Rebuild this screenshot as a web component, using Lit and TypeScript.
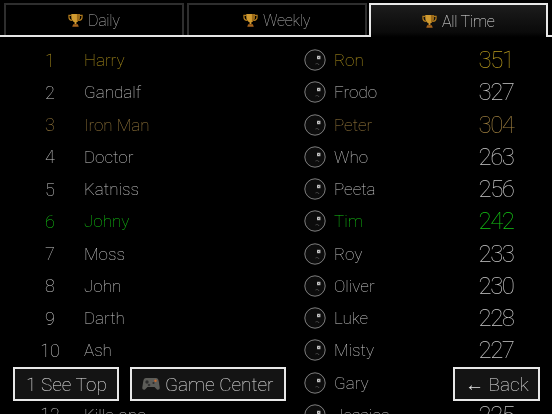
import { LitElement, html, css, svg } from "lit";
import { customElement } from "lit/decorators.js";

type Row = { a: string; b: string; s: number; c?: string };
const rows: Row[] = [
  { a: "Harry", b: "Ron", s: 351, c: "gold" },
  { a: "Gandalf", b: "Frodo", s: 327 },
  { a: "Iron Man", b: "Peter", s: 304, c: "bronze" },
  { a: "Doctor", b: "Who", s: 263 },
  { a: "Katniss", b: "Peeta", s: 256 },
  { a: "Johny", b: "Tim", s: 242, c: "green" },
  { a: "Moss", b: "Roy", s: 233 },
  { a: "John", b: "Oliver", s: 230 },
  { a: "Darth", b: "Luke", s: 228 },
  { a: "Ash", b: "Misty", s: 227 },
  { a: "", b: "Gary", s: 226 },
  { a: "Killa ono", b: "Jessica", s: 225 },
];

const trophy = svg`<svg class="trophy" viewBox="0 0 16 16" aria-hidden="true">
  <path d="M3.5 2.5H1v2c0 2 1.500 3.200 3.500 3.500M12.500 2.500H15v2c0 2-1.500 3.200-3.500 3.500" fill="none" stroke="#b07a1c" stroke-width="1.300"/>
  <path d="M3.500 1h9v3.500c0 3-2 4.800-3.500 5.300v2.200H7V9.800C5.500 9.300 3.500 7.500 3.500 4.500z" fill="#d09a30"/>
  <path d="M9.500 1h3v3.500c0 2.500-1.500 4.300-3 5z" fill="#9c6a18"/>
  <path d="M5.500 12h5l1 2.700h-7z" fill="#a8641c"/>
</svg>`;

const face = svg`<svg class="face" viewBox="0 0 22 22" aria-hidden="true">
  <circle cx="11" cy="11" r="10.200" fill="#0c0c0c" stroke="#8c8c8c" stroke-width="0.900"/>
  <rect x="13" y="6.800" width="3.400" height="3.400" fill="#ccc"/>
  <path d="M13.800 7.600l1.800 1.800M15.600 7.600l-1.800 1.800" stroke="#333" stroke-width="0.500"/>
  <path d="M11.500 15c1.500-.8 3-.5 3.500 1" fill="none" stroke="#555" stroke-width="0.800"/>
</svg>`;

const pad = svg`<svg class="pad" viewBox="0 0 18 16" aria-hidden="true">
  <path d="M4 2h10c1.500 0 2.300 1 2.700 3l1 6.500c.2 2-1.700 3-3 1.700L12.500 11h-7l-2.200 2.200c-1.300 1.300-3.200.3-3-1.700l1-6.500C1.700 3 2.500 2 4 2z" fill="#5c5c58"/>
  <circle cx="5" cy="6" r="1.700" fill="#2b2b2b"/>
  <circle cx="13.500" cy="4.800" r="1.200" fill="#c8682c"/>
  <circle cx="11.500" cy="7" r="1.100" fill="#2f2f2f"/>
  <circle cx="7" cy="9" r="1.300" fill="#333"/>
</svg>`;

@customElement("app-root")
export class AppRoot extends LitElement {
  static styles = css`
    :host {
      display: block;
      position: relative;
      width: 552px;
      height: 414px;
      overflow: hidden;
      background: #000;
      color: #c8c8c8;
      font-family: "Roboto", "Noto Sans", sans-serif;
      font-weight: 100;
    }
    .t { will-change: transform; }
    .tabs {
      display: grid;
      grid-template-columns: 180px 180px 179px;
      gap: 2.5px;
      height: 37px;
      padding: 3px 4px 0;
      box-sizing: border-box;
      border-bottom: 2px solid #e4e4e4;
    }
    .tab {
      display: flex;
      align-items: center;
      justify-content: center;
      gap: 5px;
      border: 2px solid #2e2e2e;
      border-bottom: 0;
      font-size: 16px;
      letter-spacing: -0.3px;
      color: #b8b8b8;
    }
    .tab.on {
      border: 2px solid #e8e8e8;
      border-bottom: 0;
      margin-bottom: -2px;
      background: linear-gradient(#1c1c1c, #0a0a0a 85%, #000);
      color: #e4e4e4;
    }
    .trophy { width: 15px; height: 15px; }
    .list { display: block; padding-top: 7px; will-change: transform; }
    .row {
      display: grid;
      grid-template-columns: 84px 220px 30px 132px 60px;
      height: 32.25px;
      align-items: center;
      font-size: 17px;
    }
    .rank { text-align: center; padding-left: 16px; box-sizing: border-box; font-size: 18px; }
    .face { width: 22px; height: 22px; display: block; }
    .score { text-align: center; font-size: 24px; letter-spacing: -1.5px; }
    .gold { color: #b89a1e; }
    .bronze { color: #a08040; }
    .green { color: #14c814; }
    .btn {
      position: absolute;
      top: 367px;
      height: 34px;
      box-sizing: border-box;
      border: 2px solid #e8e8e8;
      background: #141414;
      display: flex;
      align-items: center;
      justify-content: center;
      gap: 5px;
      font-size: 19px;
      color: #e4e4e4;
    }
    .top { left: 13px; width: 106px; }
    .gc { left: 130px; width: 156px; }
    .back { left: 453px; width: 87px; }
    .pad { width: 18px; height: 16px; }
  `;

  render() {
    return html`
      <div class="tabs">
        <div class="tab">${trophy}<span class="t">Daily</span></div>
        <div class="tab">${trophy}<span class="t">Weekly</span></div>
        <div class="tab on">${trophy}<span class="t">All Time</span></div>
      </div>
      <div class="list">
        ${rows.map(
          (r, i) => html`<div class="row ${r.c ?? ""}">
            <span class="rank">${i + 1}</span>
            <span>${r.a}</span>
            ${face}
            <span>${r.b}</span>
            <span class="score">${r.s}</span>
          </div>`
        )}
      </div>
      <div class="btn top"><span class="t">1 See Top</span></div>
      <div class="btn gc">${pad}<span class="t">Game Center</span></div>
      <div class="btn back"><span class="t">← Back</span></div>
    `;
  }
}
